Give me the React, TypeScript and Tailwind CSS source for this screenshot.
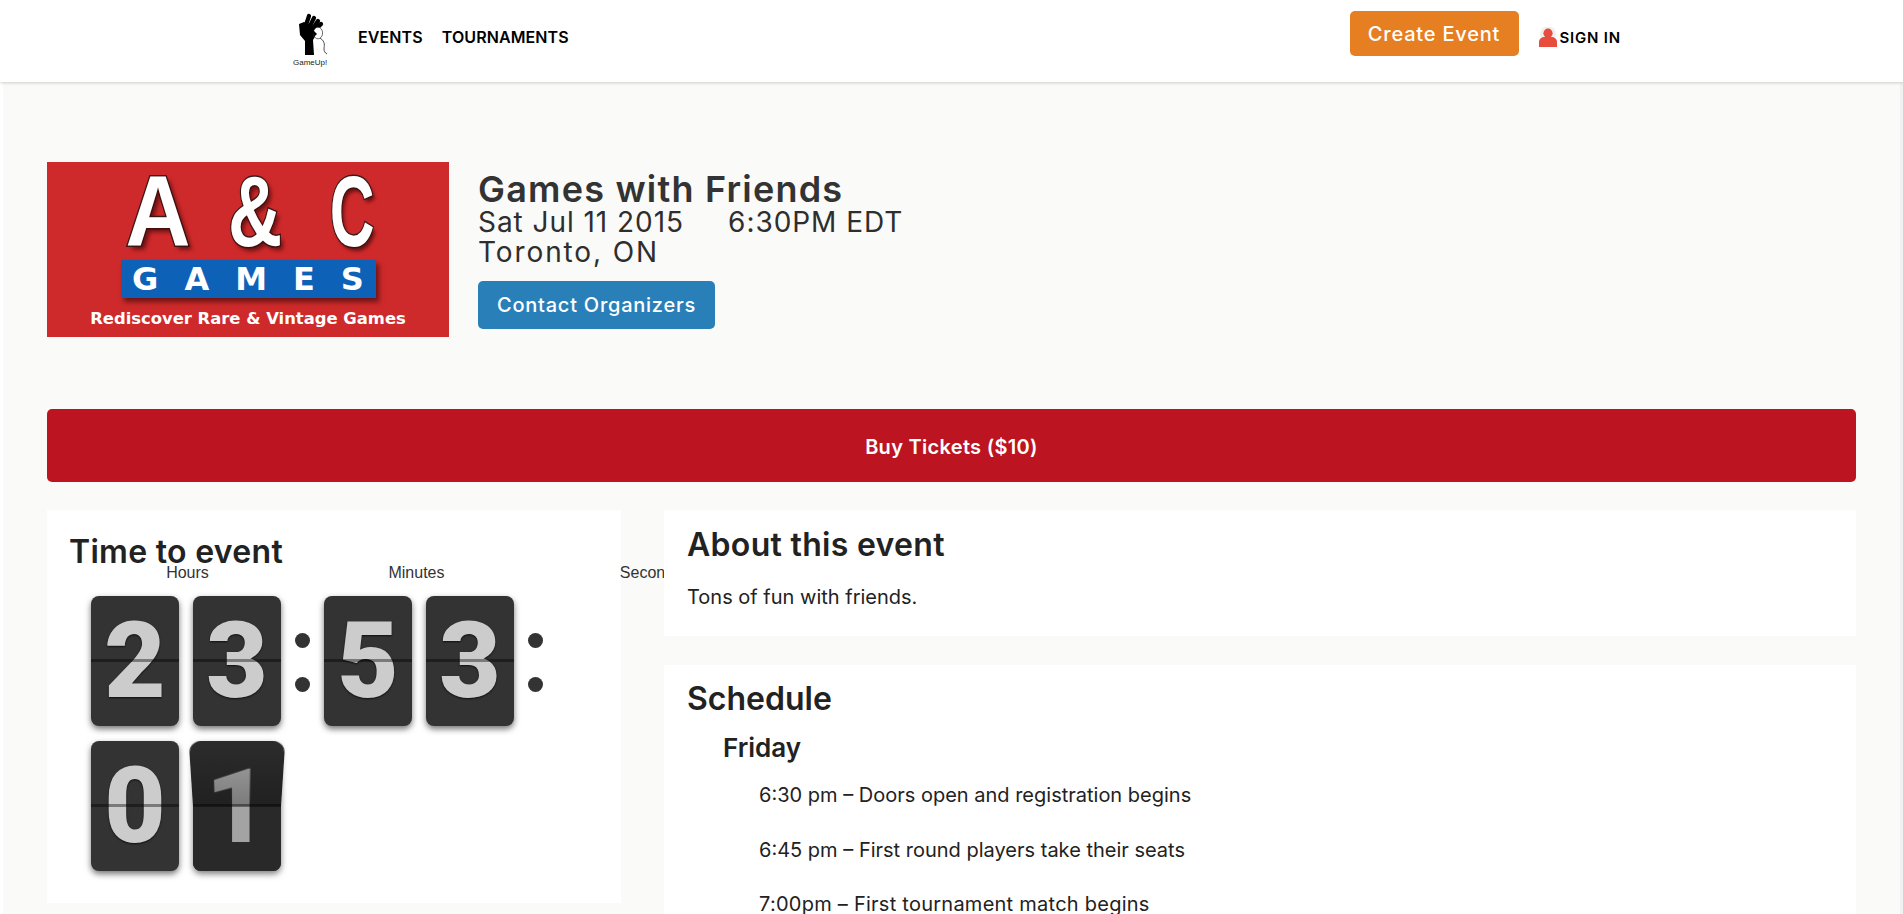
const digitFont = "font-['Roboto',Arial,sans-serif]";

function Logo() {
  return (
    <div className="relative h-[54px] w-[40px] mt-[3px]">
      <svg width="40" height="46" viewBox="0 0 40 46" fill="none">
        <g stroke="#000" strokeWidth="4.2" strokeLinecap="round">
          <path d="M13 12 L16 3" />
          <path d="M17 13 L21 5" />
          <path d="M21 14 L25 8" />
          <path d="M24 15 L28 11" />
        </g>
        <path d="M6 11 L11 9 L24 14 L23 22 L20 27 L21 42 L12 42 L12 28 L7 22 Z" fill="#000" />
        <ellipse cx="25" cy="20" rx="4.6" ry="5.8" fill="#fff" stroke="#333" strokeWidth="0.7" />
        <path d="M19 16 L24 21 L21 24 Z" fill="#000" />
        <path d="M27 25 C33 29 31 33 31 36 C31 38 32 40 34 41" stroke="#222" strokeWidth="0.8" />
      </svg>
      <span className="absolute left-0 top-[45px] whitespace-nowrap font-['Liberation_Sans',Arial,sans-serif] text-[8px] leading-[10px] text-[#222]">
        GameUp!
      </span>
    </div>
  );
}

function PersonIcon() {
  return (
    <svg width="18" height="20" viewBox="0 0 18 20">
      <circle cx="9" cy="7" r="8" fill="#efefef" />
      <circle cx="9" cy="6.2" r="4.6" fill="#e74c3c" />
      <path d="M0 20 V15 C0 11.5 3 10 5.5 10 H12.5 C15 10 18 11.5 18 15 V20 Z" fill="#e74c3c" />
    </svg>
  );
}

function Header() {
  return (
    <header className="flex h-[82px] items-start bg-white pl-[293px] pr-[282px] relative z-20 shadow-[0_1px_3px_rgba(0,0,0,0.18)]">
      <div className="mt-[10px]">
        <Logo />
      </div>
      <nav className="ml-[25px] mt-[27px] flex gap-[19px] text-[16px] leading-[20px] font-semibold text-black tracking-[0.1px]">
        <span>EVENTS</span>
        <span>TOURNAMENTS</span>
      </nav>
      <div className="ml-auto mt-[11px] flex items-start">
        <button className="h-[45px] w-[169px] rounded-[5px] bg-[#e67e22] text-[20px] font-medium tracking-[0.8px] text-white">
          Create Event
        </button>
        <div className="ml-[20px] mt-[14px] flex items-center gap-[3px]">
          <PersonIcon />
          <span className="mt-[3px] text-[15px] leading-[20px] font-semibold tracking-[0.8px] text-black">SIGN IN</span>
        </div>
      </div>
    </header>
  );
}

function EventBanner() {
  const bigLetter =
    "inline-block font-['Liberation_Sans',sans-serif] font-bold text-[100px] leading-[80px] text-white [-webkit-text-stroke:3px_#3a1a1a] [paint-order:stroke_fill] [text-shadow:4px_4px_5px_rgba(70,10,10,0.75)]";
  return (
    <div className="flex h-[175px] w-[402px] shrink-0 flex-col items-center overflow-hidden bg-[#cf2a2b]">
      <div className="ml-[14px] mt-[6px] flex h-[86px] w-[266px] items-center justify-between">
        <span className={bigLetter + " scale-x-[0.9]"}>A</span>
        <span className={bigLetter + " scale-x-[0.75]"}>&amp;</span>
        <span className={bigLetter + " scale-x-[0.62]"}>C</span>
      </div>
      <div className="mt-[6px] flex h-[38px] w-[255px] items-center justify-center bg-[#0d62b8] pl-[26px] font-['DejaVu_Sans',sans-serif] text-[32px] font-bold leading-none tracking-[26px] text-white shadow-[3px_4px_5px_rgba(70,10,10,0.7)]">
        GAMES
      </div>
      <div className="mt-[11px] whitespace-nowrap font-['DejaVu_Sans',sans-serif] text-[16.4px] font-bold leading-[20px] text-white">
        Rediscover Rare &amp; Vintage Games
      </div>
    </div>
  );
}

function FlipCard({ digit }: { digit: string }) {
  return (
    <div className="relative h-[130px] w-[88px] rounded-[8px] bg-[#333] shadow-[0_3px_6px_rgba(0,0,0,0.55)]">
      <div
        className={`${digitFont} flex h-full items-center justify-center pb-[1px] text-[106px] font-black leading-none text-[#ccc] [text-shadow:0_1px_2px_rgba(0,0,0,0.7)]`}
      >
        {digit}
      </div>
      <div className="absolute inset-x-0 top-[63px] h-[3px] bg-black/40" />
    </div>
  );
}

function FlippingCard({ digit }: { digit: string }) {
  const number = `${digitFont} flex h-[130px] w-[88px] items-center justify-center pb-[1px] text-[106px] font-black leading-none text-[#a3a3a3]`;
  return (
    <div className="relative h-[130px] w-[88px] rounded-[8px] bg-[#292929] shadow-[0_3px_6px_rgba(0,0,0,0.5)]">
      <div className="absolute inset-x-0 top-[65px] h-[65px] overflow-hidden rounded-b-[8px]">
        <div className={`${number} -mt-[65px] bg-[#292929]`}>{digit}</div>
      </div>
      <div className="absolute inset-x-0 top-0 h-[65px] origin-bottom overflow-hidden rounded-t-[10px] bg-[#2b2b2b] [transform:perspective(190px)_rotateX(-16deg)_scaleY(0.94)]">
        <div className={number}>{digit}</div>
        <div className="absolute inset-0 bg-gradient-to-b from-transparent to-black/25" />
      </div>
      <div className="absolute inset-x-0 top-[63px] h-[3px] bg-black/40" />
    </div>
  );
}

function Colon() {
  return (
    <div className="flex w-[43px] shrink-0 flex-col items-center gap-[29px] pt-[37px]">
      <div className="h-[15px] w-[15px] rounded-full bg-[#333]" />
      <div className="h-[15px] w-[15px] rounded-full bg-[#333]" />
    </div>
  );
}

function Countdown() {
  return (
    <section className="h-[393px] bg-white pl-[22px] pt-[24px]">
      <h2 className="text-[32px] font-semibold leading-[36px] text-[#222] tracking-[0.3px]">Time to event</h2>
      <div className="-mt-[6px] ml-[4px] flex whitespace-nowrap font-['Liberation_Sans',Arial,sans-serif] text-[16px] leading-[18px] text-[#333]">
        <span className="w-[229px] shrink-0 text-center">Hours</span>
        <span className="w-[229px] shrink-0 text-center">Minutes</span>
        <span className="w-[229px] shrink-0 pl-[11px] text-center">Seconds</span>
      </div>
      <div className="ml-[22px] mt-[14px] flex flex-wrap gap-y-[15px]">
        <div className="flex gap-[14px]">
          <FlipCard digit="2" />
          <FlipCard digit="3" />
        </div>
        <Colon />
        <div className="flex gap-[14px]">
          <FlipCard digit="5" />
          <FlipCard digit="3" />
        </div>
        <Colon />
        <div className="flex gap-[14px]">
          <FlipCard digit="0" />
          <FlippingCard digit="1" />
        </div>
      </div>
    </section>
  );
}

const scheduleItems = [
  "6:30 pm – Doors open and registration begins",
  "6:45 pm – First round players take their seats",
  "7:00pm – First tournament match begins",
];

export default function App() {
  return (
    <div className="h-[914px] overflow-hidden bg-white font-['Inter',sans-serif]">
      <div className="ml-[3px] mr-0 h-full border-r-[3px] border-[#f1f1f1] bg-[#fafaf8]">
        <div className="-ml-[3px] -mr-[3px]">
          <Header />
        </div>
        <main className="px-[44px] pt-[80px]">
          <div className="flex gap-[29px]">
            <EventBanner />
            <div className="pt-[9px] text-[#333]">
              <h1 className="text-[36px] font-semibold leading-[37px] tracking-[1.2px]">Games with Friends</h1>
              <p className="text-[28px] font-normal leading-[29px] tracking-[0.95px] whitespace-pre text-[#2e2e2e]">
                {"Sat Jul 11 2015     6:30PM EDT"}
              </p>
              <p className="text-[28px] font-normal leading-[30px] tracking-[1.9px] text-[#2e2e2e]">Toronto, ON</p>
              <button className="mt-[14px] h-[48px] w-[237px] rounded-[5px] bg-[#2980b9] text-[20px] font-medium tracking-[0.75px] text-white">
                Contact Organizers
              </button>
            </div>
          </div>

          <button className="mt-[72px] h-[73px] w-full rounded-[5px] bg-[#bd1421] pt-[2px] text-[20px] font-semibold tracking-[0.3px] text-white">
            Buy Tickets ($10)
          </button>

          <div className="mt-[28px] flex items-start gap-[43px]">
            <div className="w-[574px] shrink-0">
              <Countdown />
            </div>
            <div className="relative z-10 min-w-0 flex-1 text-[#222]">
              <section className="h-[126px] bg-white px-[23px] pt-[17px]">
                <h2 className="text-[32px] font-semibold leading-[36px] tracking-[0.3px]">About this event</h2>
                <p className="mt-[21px] text-[20px] leading-[26px]">Tons of fun with friends.</p>
              </section>
              <section className="mt-[29px] bg-white px-[23px] pb-[30px] pt-[16px]">
                <h2 className="text-[32px] font-semibold leading-[36px]">Schedule</h2>
                <h3 className="ml-[36px] mt-[16px] text-[26px] font-semibold leading-[30px]">Friday</h3>
                <div className="ml-[72px] mt-[19px] flex flex-col gap-[28.5px]">
                  {scheduleItems.map((item, i) => (
                    <p key={item} className={i === 2 ? "text-[20px] leading-[26px] tracking-[0.25px]" : "text-[20px] leading-[26px]"}>
                      {item}
                    </p>
                  ))}
                </div>
              </section>
            </div>
          </div>
        </main>
      </div>
    </div>
  );
}
